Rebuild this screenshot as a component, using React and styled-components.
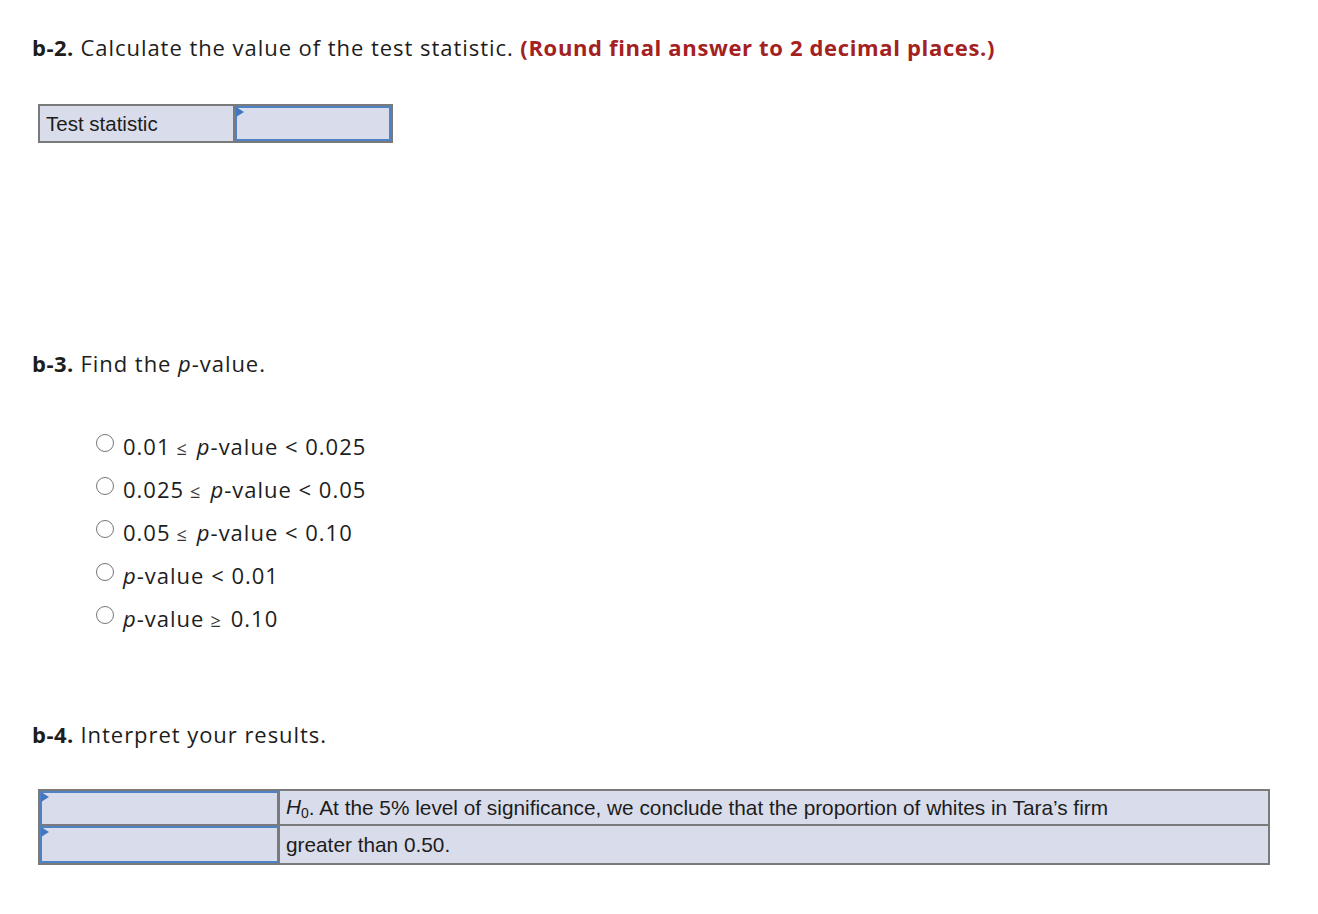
import React from "react";
import styled, { createGlobalStyle } from "styled-components";

const Global = createGlobalStyle`
  body {
    margin: 0;
    background: #fff;
    font-family: "Open Sans", Lato, sans-serif;
    color: #1d1d1d;
  }
`;

const Page = styled.div`
  padding: 31px 32px;
`;

const Heading = styled.div`
  font-size: 22px;
  line-height: 32px;
  letter-spacing: 0.95px;
  margin-top: ${p => p.top || 0}px;

  b {
    font-weight: 700;
    letter-spacing: 0.5px;
  }
  .note {
    color: #a3211f;
    font-weight: 700;
    letter-spacing: 0.65px;
  }
  i {
    font-style: italic;
  }
`;

const Grid = styled.div`
  display: grid;
  grid-template-columns: ${p => p.cols};
  width: ${p => p.width}px;
  box-sizing: border-box;
  margin: ${p => p.margin};
  border: 2px solid #7a7a7a;
  background: #d9dcea;
  font-family: "Liberation Sans", Arial, sans-serif;
  font-size: 20.5px;
  color: #1d1d1d;
`;

const Cell = styled.div`
  height: ${p => p.h || 35}px;
  box-sizing: border-box;
  padding: 0 6px;
  display: flex;
  align-items: center;
  font-size: ${p => p.size || 20.5}px;
  border-right: ${p => (p.divider ? "2px solid #7a7a7a" : "none")};
  border-bottom: ${p => (p.under ? "2px solid #7a7a7a" : "none")};
  i sub {
    font-size: 14px;
    font-style: normal;
    vertical-align: -4px;
  }
`;

const Input = styled.div`
  position: relative;
  height: ${p => p.h || 35}px;
  box-sizing: border-box;
  border: 2px solid #4e82c4;
  border-right: ${p => (p.divider ? "3px solid #7a7a7a" : "2px solid #4e82c4")};
  border-bottom: ${p => (p.under ? "2px solid #7a7a7a" : "2px solid #4e82c4")};
  background: #d9dcea;

  &::before {
    content: "";
    position: absolute;
    left: -1px;
    top: -1px;
    border-top: 5px solid transparent;
    border-bottom: 5px solid transparent;
    border-left: 8px solid #3f77c2;
  }
`;

const Options = styled.div`
  margin: 51px 0 0 64px;
  display: flex;
  flex-direction: column;
  gap: 11px;
`;

const Option = styled.label`
  display: flex;
  align-items: center;
  gap: 9px;
  font-size: 22px;
  letter-spacing: 1px;
  height: 32px;

  i {
    font-style: italic;
  }
  .le {
    font-size: 18px;
    margin: 0 10px 0 6px;
    color: #333;
    letter-spacing: 0;
  }
`;

const Radio = styled.span`
  width: 18px;
  height: 18px;
  border: 1.5px solid #777;
  border-radius: 50%;
  box-sizing: border-box;
  margin-top: -6px;
  flex-shrink: 0;
`;

const options = [
  ["0.01", "≤", "< 0.025"],
  ["0.025", "≤", "< 0.05"],
  ["0.05", "≤", "< 0.10"],
  [null, null, "< 0.01"],
  [null, "≥", "0.10"],
];

export default function App() {
  return (
    <Page>
      <Global />
      <Heading>
        <b>b-2.</b> Calculate the value of the test statistic.{" "}
        <span className="note">(Round final answer to 2 decimal places.)</span>
      </Heading>
      <Grid cols="195px 1fr" width={355} margin="41px 0 0 6px">
        <Cell divider>Test statistic</Cell>
        <Input />
      </Grid>

      <Heading top={204}>
        <b>b-3.</b> Find the <i>p</i>-value.
      </Heading>
      <Options>
        {options.map(([lo, sign, rest], i) => (
          <Option key={i}>
            <Radio />
            <span>
              {lo}
              {lo && sign && <span className="le">{sign}</span>}
              <i>p</i>-value
              {!lo && sign ? <span className="le">{sign}</span> : " "}
              {rest}
            </span>
          </Option>
        ))}
      </Options>

      <Heading top={84}>
        <b>b-4.</b> Interpret your results.
      </Heading>
      <Grid cols="240px 1fr" width={1232} margin="39px 0 0 6px">
        <Input divider under />
        <Cell under size={20.8}>
          <i>
            H<sub>0</sub>
          </i>
          . At the 5% level of significance, we conclude that the proportion of whites in Tara’s firm
        </Cell>
        <Input divider h={37} />
        <Cell h={37} size={20.8}>greater than 0.50.</Cell>
      </Grid>
    </Page>
  );
}
